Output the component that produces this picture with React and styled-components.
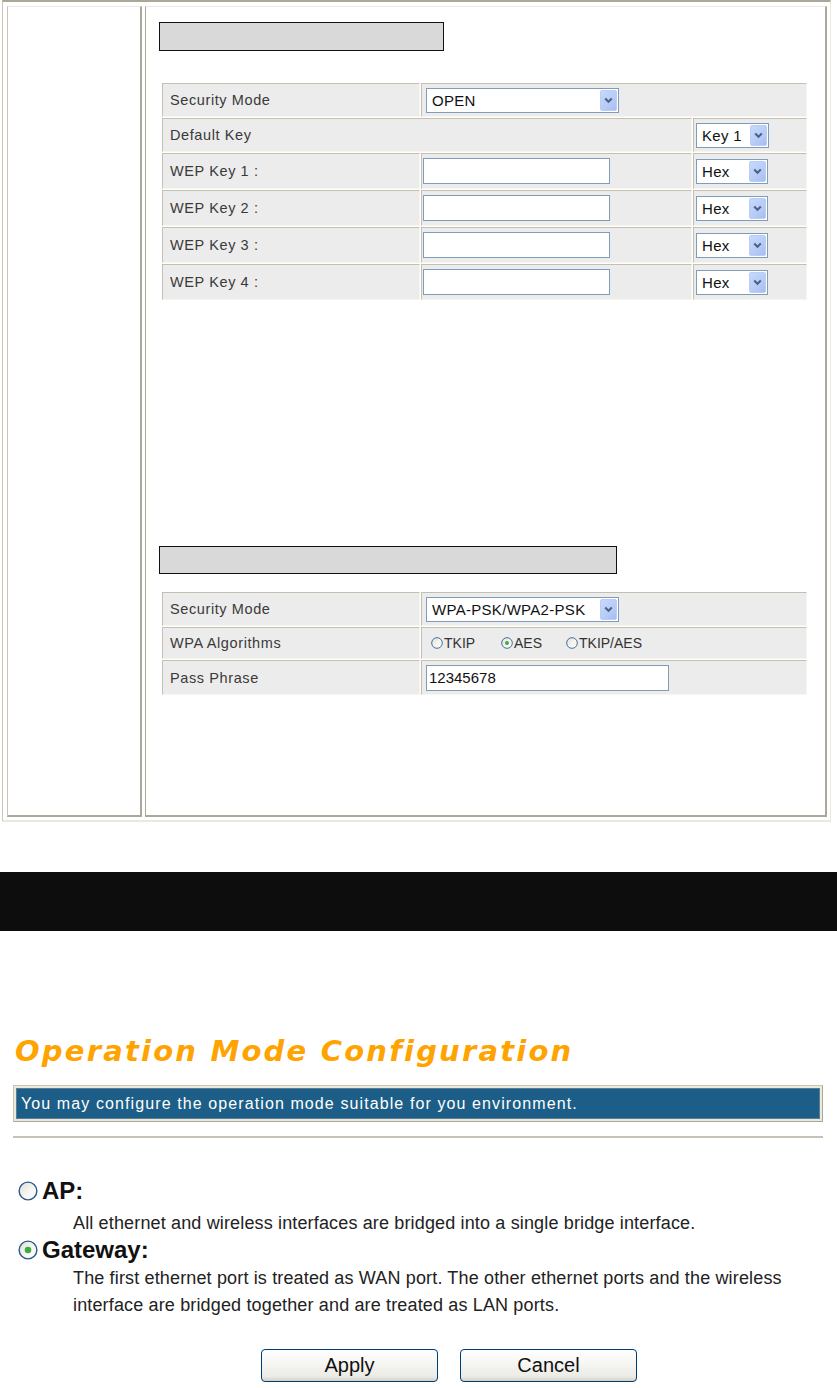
import React from 'react'
import styled, { createGlobalStyle } from 'styled-components'

const GlobalStyle = createGlobalStyle`
  html, body {
    margin: 0;
    padding: 0;
    background: #ffffff;
  }
  body {
    font-family: "Liberation Sans", Arial, sans-serif;
    color: #222;
  }
  table, td, button {
    font-family: "Liberation Sans", Arial, sans-serif;
  }
`

// ---------- little drawings ----------
const RadioIcon = ({ size = 13, checked }) => (
  <svg width={size} height={size} viewBox="0 0 14 14">
    <defs>
      <linearGradient id="radioFill" x1="0" y1="0" x2="1" y2="1">
        <stop offset="0" stopColor="#dcdcd6" />
        <stop offset="0.5" stopColor="#f4f4f2" />
        <stop offset="1" stopColor="#ffffff" />
      </linearGradient>
    </defs>
    <circle cx="7" cy="7" r="6.2" fill="url(#radioFill)" stroke="#2f5a8a" strokeWidth="1" />
    {checked && <circle cx="7" cy="7" r="2.3" fill="#3dab3d" />}
  </svg>
)

const Chevron = () => (
  <svg width="9" height="7" viewBox="0 0 9 7">
    <path d="M1.2 1.5 L4.5 4.8 L7.8 1.5" fill="none" stroke="#4d6185" strokeWidth="2" />
  </svg>
)

const Select = ({ value, width, left = 4 }) => (
  <SelectBox $width={width} $left={left}>
    <span>{value}</span>
    <DropButton><Chevron /></DropButton>
  </SelectBox>
)

// ---------- page ----------
const App = () => {
  return (
    <Page>
      <GlobalStyle />
      <Frame>
        <SideCell />
        <MainCell>
          <TitleBox $width={285} $height={29} />
          <FormTable $top={31} $width={647}>
            <colgroup>
              <col style={{ width: 258 }} />
              <col style={{ width: 271 }} />
              <col style={{ width: 114 }} />
            </colgroup>
            <tbody>
              <tr>
                <Label $h={34}>Security Mode</Label>
                <Value colSpan={2}><Select value="OPEN" width={193} /></Value>
              </tr>
              <tr>
                <Label colSpan={2} $h={34}>Default Key</Label>
                <Value><Select value="Key 1" width={73} left={2} /></Value>
              </tr>
              {[1, 2, 3, 4].map(n => (
                <tr key={n}>
                  <Label $h={36}>WEP Key {n} :</Label>
                  <Value><TextInput $width={187} $left={1} /></Value>
                  <Value><Select value="Hex" width={72} left={2} /></Value>
                </tr>
              ))}
            </tbody>
          </FormTable>

          <TitleBox $width={458} $height={28} $top={245} />
          <FormTable $top={17} $width={647}>
            <colgroup>
              <col style={{ width: 258 }} />
              <col style={{ width: 386 }} />
            </colgroup>
            <tbody>
              <tr>
                <Label $h={34}>Security Mode</Label>
                <Value><Select value="WPA-PSK/WPA2-PSK" width={193} /></Value>
              </tr>
              <tr>
                <Label $h={32}>WPA Algorithms</Label>
                <Value>
                  <RadioGroup>
                    <RadioOption $width={70}><RadioIcon size={12} />TKIP</RadioOption>
                    <RadioOption $width={65}><RadioIcon size={12} checked />AES</RadioOption>
                    <RadioOption><RadioIcon size={12} />TKIP/AES</RadioOption>
                  </RadioGroup>
                </Value>
              </tr>
              <tr>
                <Label $h={35}>Pass Phrase</Label>
                <Value><TextInput $width={243} $left={4}>12345678</TextInput></Value>
              </tr>
            </tbody>
          </FormTable>
        </MainCell>
      </Frame>

      <BlackBar />

      <Section>
        <Heading>Operation Mode Configuration</Heading>
        <InfoBar>
          <InfoText>You may configure the operation mode suitable for you environment.</InfoText>
        </InfoBar>
        <Rule />

        <ModeList>
          <ModeTitle><RadioIcon size={20} />AP:</ModeTitle>
          <ModeDesc $top={6}>All ethernet and wireless interfaces are bridged into a single bridge interface.</ModeDesc>
          <ModeTitle><RadioIcon size={20} checked />Gateway:</ModeTitle>
          <ModeDesc $top={2}>
            The first ethernet port is treated as WAN port. The other ethernet ports and the wireless<br />
            interface are bridged together and are treated as LAN ports.
          </ModeDesc>
        </ModeList>

        <ButtonRow>
          <Button>Apply</Button>
          <Button>Cancel</Button>
        </ButtonRow>
      </Section>
    </Page>
  )
}

// ///// Style ////////
const Page = styled.div`
  width: 837px;
  min-height: 1388px;
  overflow: hidden;
`

// Top frame ============
const Frame = styled.div`
  margin-left: 2px;
  width: 829px;
  box-sizing: border-box;
  display: grid;
  grid-template-columns: 135px 1fr;
  column-gap: 3px;
  padding: 4px 3px 3px 4px;
  border-top: 2px solid #aca899;
  border-left: 1px solid #c9c6b8;
  border-right: 1px solid #ebe9dc;
  border-bottom: 2px solid #ebe9dc;
`
const Cell = styled.div`
  border-top: 1px solid #ebe9dc;
  border-left: 1px solid #c9c6b8;
  border-right: 2px solid #aca899;
  border-bottom: 2px solid #aca899;
`
const SideCell = styled(Cell)``
const MainCell = styled(Cell)`
  padding: 15px 0 119px 13px;
  border-left-color: #aca899;
`
const TitleBox = styled.div`
  width: ${p => p.$width}px;
  height: ${p => p.$height}px;
  box-sizing: border-box;
  margin-top: ${p => p.$top || 0}px;
  background: #d9d9d9;
  border: 1px solid #111;
`
const FormTable = styled.table`
  margin-top: ${p => p.$top}px;
  margin-left: 2px;
  width: ${p => p.$width}px;
  table-layout: fixed;
  border-collapse: separate;
  border-spacing: 1px;
`
const Td = styled.td`
  box-sizing: border-box;
  background: #ececec;
  border-top: 1px solid #c3c0b2;
  border-left: 1px solid #c3c0b2;
  border-right: 1px solid #f6f5ee;
  border-bottom: 1px solid #f6f5ee;
  padding: 0;
  vertical-align: middle;
`
const Label = styled(Td)`
  height: ${p => p.$h}px;
  padding-left: 7px;
  font-family: "Liberation Sans", Arial, sans-serif;
  font-size: 14.5px;
  letter-spacing: 0.6px;
  color: #3a3a3a;
`
const Value = styled(Td)``

const SelectBox = styled.div`
  position: relative;
  margin-left: ${p => p.$left}px;
  width: ${p => p.$width}px;
  height: 25px;
  box-sizing: border-box;
  border: 1px solid #7f9db9;
  background: #fff;
  display: flex;
  align-items: center;
  padding-left: 5px;
  font-family: "Liberation Sans", Arial, sans-serif;
  font-size: 15px;
  letter-spacing: 0.3px;
  color: #111;
  white-space: nowrap;
  overflow: hidden;
`
const DropButton = styled.span`
  position: absolute;
  right: 1px;
  top: 1px;
  bottom: 1px;
  width: 17px;
  border-radius: 2px;
  border: 1px solid #b9cdf6;
  box-sizing: border-box;
  background: linear-gradient(135deg, #c6d8fc 0%, #b6cbf7 60%, #a6bdf0 100%);
  display: flex;
  align-items: center;
  justify-content: center;
`
const TextInput = styled.div`
  margin-left: ${p => p.$left}px;
  width: ${p => p.$width}px;
  height: 26px;
  box-sizing: border-box;
  border: 1px solid #7f9db9;
  background: #fff;
  display: flex;
  align-items: center;
  padding-left: 2px;
  font-family: "Liberation Sans", Arial, sans-serif;
  font-size: 15px;
  color: #111;
`
const RadioGroup = styled.div`
  display: flex;
  align-items: center;
  padding-left: 9px;
`
const RadioOption = styled.span`
  display: inline-flex;
  align-items: center;
  gap: 1px;
  width: ${p => (p.$width ? `${p.$width}px` : 'auto')};
  font-family: "Liberation Sans", Arial, sans-serif;
  font-size: 14px;
  color: #333;
`

// Black strip ============
const BlackBar = styled.div`
  margin-top: 50px;
  height: 59px;
  background: #0d0d0d;
`

// Operation mode =================
const Section = styled.div`
  margin: 0 14px 0 13px;
`
const Heading = styled.h1`
  margin: 102px 0 0 2px;
  font-family: "DejaVu Sans", Verdana, sans-serif;
  font-weight: bold;
  font-style: italic;
  font-size: 29px;
  line-height: 36px;
  letter-spacing: 2.2px;
  color: #ffa300;
  white-space: nowrap;
`
const InfoBar = styled.div`
  margin-top: 16px;
  height: 37px;
  box-sizing: border-box;
  padding: 2px;
  background: #ece9d8;
  border: 1px solid #c9c6b6;
  border-right-color: #aca899;
  border-bottom-color: #aca899;
`
const InfoText = styled.div`
  height: 100%;
  box-sizing: border-box;
  background: #1c5e87;
  border: 1px solid #5b7c96;
  color: #fff;
  font-family: "Liberation Sans", Arial, sans-serif;
  font-size: 16px;
  letter-spacing: 1.1px;
  line-height: 29px;
  padding-left: 4px;
  white-space: nowrap;
`
const Rule = styled.div`
  margin-top: 14px;
  height: 2px;
  background: #c6c3b4;
`
const ModeList = styled.div`
  margin-top: 40px;
  padding-left: 5px;
`
const ModeTitle = styled.div`
  display: flex;
  align-items: center;
  gap: 4px;
  font-family: "Liberation Sans", Arial, sans-serif;
  font-size: 24px;
  font-weight: bold;
  line-height: 26px;
  color: #111;
`
const ModeDesc = styled.div`
  margin-top: ${p => p.$top}px;
  padding-left: 55px;
  font-family: "Liberation Sans", Arial, sans-serif;
  font-size: 18px;
  letter-spacing: 0.15px;
  line-height: 27px;
  color: #222;
`
const ButtonRow = styled.div`
  display: flex;
  gap: 22px;
  padding-left: 248px;
  margin-top: 30px;
`
const Button = styled.button`
  width: 177px;
  height: 33px;
  border: 1px solid #003c74;
  border-radius: 4px;
  background: linear-gradient(#ffffff 0%, #f4f4f0 50%, #ecebe6 85%, #d6d0c5 100%);
  font-family: "Liberation Sans", Arial, sans-serif;
  font-size: 20px;
  color: #111;
  padding: 0;
`

export default App
